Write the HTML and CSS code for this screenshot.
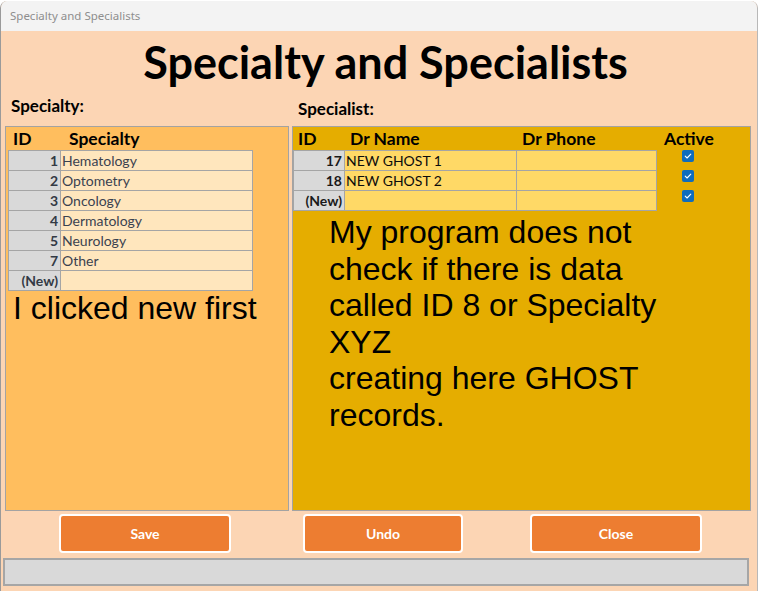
FILE: index.html
```html
<!DOCTYPE html>
<html>
<head>
<meta charset="utf-8">
<title>Specialty and Specialists</title>
<link rel="stylesheet" href="styles.css">
</head>
<body>
<div class="window">
  <div class="titlebar">Specialty and Specialists</div>
  <div class="client">
    <h1 class="heading">Specialty and Specialists</h1>
    <div class="labels">
      <div class="label label-left">Specialty:</div>
      <div class="label label-right">Specialist:</div>
    </div>
    <div class="panels">
      <div class="panel panel-left">
        <div class="head head-left">
          <span class="h-id">ID</span>
          <span class="h-spec">Specialty</span>
        </div>
        <div class="grid grid-left">
          <div class="c-id">1</div><div class="c-txt">Hematology</div>
          <div class="c-id">2</div><div class="c-txt">Optometry</div>
          <div class="c-id">3</div><div class="c-txt">Oncology</div>
          <div class="c-id">4</div><div class="c-txt">Dermatology</div>
          <div class="c-id">5</div><div class="c-txt">Neurology</div>
          <div class="c-id">7</div><div class="c-txt">Other</div>
          <div class="c-id">(New)</div><div class="c-txt"></div>
        </div>
        <div class="note note-left">I clicked new first</div>
      </div>
      <div class="panel panel-right">
        <div class="head head-right">
          <span class="h-rid">ID</span>
          <span class="h-name">Dr Name</span>
          <span class="h-phone">Dr Phone</span>
          <span class="h-active">Active</span>
        </div>
        <div class="rbody">
          <div class="grid grid-right">
            <div class="c-id">17</div><div class="c-txt c-dark">NEW GHOST 1</div><div class="c-txt"></div>
            <div class="c-id">18</div><div class="c-txt c-dark">NEW GHOST 2</div><div class="c-txt"></div>
            <div class="c-id">(New)</div><div class="c-txt"></div><div class="c-txt"></div>
          </div>
          <div class="checks">
            <span class="chk"><svg viewBox="0 0 12 12" width="12" height="12"><path d="M3.2 6.2 L5.1 8 L8.8 4.2" fill="none" stroke="#fff" stroke-width="1.1" stroke-linecap="round" stroke-linejoin="round"/></svg></span>
            <span class="chk"><svg viewBox="0 0 12 12" width="12" height="12"><path d="M3.2 6.2 L5.1 8 L8.8 4.2" fill="none" stroke="#fff" stroke-width="1.1" stroke-linecap="round" stroke-linejoin="round"/></svg></span>
            <span class="chk"><svg viewBox="0 0 12 12" width="12" height="12"><path d="M3.2 6.2 L5.1 8 L8.8 4.2" fill="none" stroke="#fff" stroke-width="1.1" stroke-linecap="round" stroke-linejoin="round"/></svg></span>
          </div>
        </div>
        <div class="note note-right">My program does not<br>check if there is data<br>called ID 8 or Specialty<br>XYZ<br>creating here GHOST<br>records.</div>
      </div>
    </div>
    <div class="buttons">
      <button class="btn btn-save">Save</button>
      <button class="btn btn-undo">Undo</button>
      <button class="btn btn-close">Close</button>
    </div>
    <div class="status"></div>
  </div>
</div>
</body>
</html>
```
FILE: styles.css
```css
html, body {
  margin: 0;
  padding: 0;
  background: #ffffff;
}
body {
  width: 758px;
  height: 591px;
  overflow: hidden;
}
.window {
  margin-top: 1px;
  width: 756px;
  height: 590px;
  border-left: 1px solid #9a9a9a;
  border-right: 1px solid #b8b8b8;
  border-top-left-radius: 7px;
  border-top-right-radius: 7px;
  overflow: hidden;
  background: #fcd5b4;
}
.titlebar {
  height: 30px;
  background: #f3f3f3;
  font-family: "Noto Sans", "Open Sans", sans-serif;
  font-size: 11.5px;
  line-height: 30px;
  color: #8e8e8e;
  padding-left: 9px;
}
.client {
  height: 560px;
  background: #fcd5b4;
  display: flex;
  flex-direction: column;
}
.heading {
  margin: 0;
  height: 64px;
  line-height: 63px;
  font-family: Lato, "Liberation Sans", sans-serif;
  font-weight: 700;
  font-size: 45px;
  color: #000;
  text-align: center;
  padding-left: 13px;
  box-sizing: border-box;
}
.labels {
  height: 31px;
  display: flex;
  font-family: Lato, "Liberation Sans", sans-serif;
  font-weight: 700;
  font-size: 17px;
  line-height: 18px;
  color: #000;
}
.label {
  box-sizing: border-box;
}
.label-left {
  width: 285px;
  padding-left: 10px;
  padding-top: 2px;
}
.label-right {
  padding-left: 12px;
  padding-top: 5px;
}
.panels {
  display: flex;
  gap: 3px;
  padding-left: 4px;
  height: 385px;
}
.panel {
  box-sizing: border-box;
  height: 385px;
  border: 1px solid #a3a3a3;
}
.panel-left {
  width: 284px;
  background: #ffbe5e;
}
.panel-right {
  width: 459px;
  background: #e5ad00;
}
.head {
  height: 23px;
  display: flex;
  font-family: Lato, "Liberation Sans", sans-serif;
  font-weight: 700;
  font-size: 17.5px;
  line-height: 23px;
  color: #000;
}
.h-id { margin-left: 7px; width: 56px; }
.h-rid { margin-left: 5px; width: 52px; }
.h-name { width: 172px; }
.h-phone { width: 142px; }
.grid {
  display: grid;
  border-top: 1px solid #a5a5a5;
  border-left: 1px solid #a5a5a5;
  font-family: Lato, "Liberation Sans", sans-serif;
  font-size: 14px;
}
.grid-left {
  margin-left: 2px;
  width: 244px;
  grid-template-columns: 52px 192px;
  grid-auto-rows: 20px;
}
.grid-right {
  width: 363px;
  grid-template-columns: 51px 172px 140px;
  grid-auto-rows: 20px;
}
.c-id, .c-txt {
  box-sizing: border-box;
  border-right: 1px solid #a5a5a5;
  border-bottom: 1px solid #a5a5a5;
  line-height: 19px;
  white-space: nowrap;
  overflow: hidden;
}
.c-id {
  background: #d9d9d9;
  text-align: right;
  font-weight: 700;
  color: #333a45;
  padding-right: 2px;
}
.grid-left .c-txt {
  background: #ffe6bd;
  color: #3b4250;
  padding-left: 1px;
}
.grid-right .c-txt {
  background: #ffd966;
  padding-left: 1px;
}
.grid-right .c-id {
  color: #1a1a1a;
}
.c-dark {
  color: #0c0c0c;
}
.rbody {
  display: flex;
}
.checks {
  display: flex;
  flex-direction: column;
  margin-left: 25px;
}
.chk {
  display: block;
  width: 12px;
  height: 12px;
  margin-bottom: 8px;
  background: #0f6cbd;
  border-radius: 2px;
}
.chk svg {
  display: block;
}
.note {
  font-family: "Liberation Sans", Arial, sans-serif;
  font-size: 32px;
  color: #000;
}
.note-left {
  line-height: 28px;
  margin-top: 3px;
  padding-left: 7px;
}
.note-right {
  line-height: 36.5px;
  padding-left: 36px;
  margin-top: 3px;
}
.buttons {
  display: flex;
  padding-top: 3px;
  height: 39px;
  padding-left: 58px;
}
.btn {
  box-sizing: border-box;
  height: 39px;
  background: #ed7d31;
  border: 2px solid #ffffff;
  border-radius: 4px;
  color: #ffffff;
  font-family: Lato, "Liberation Sans", sans-serif;
  font-weight: 700;
  font-size: 14px;
  padding: 0;
}
.btn-save { width: 172px; }
.btn-undo { width: 160px; margin-left: 72px; }
.btn-close { width: 172px; margin-left: 67px; }
.status {
  margin-top: 5px;
  margin-left: 2px;
  box-sizing: border-box;
  width: 746px;
  height: 28px;
  background: #d9d9d9;
  border: 2px solid #a6a6a6;
}
```
